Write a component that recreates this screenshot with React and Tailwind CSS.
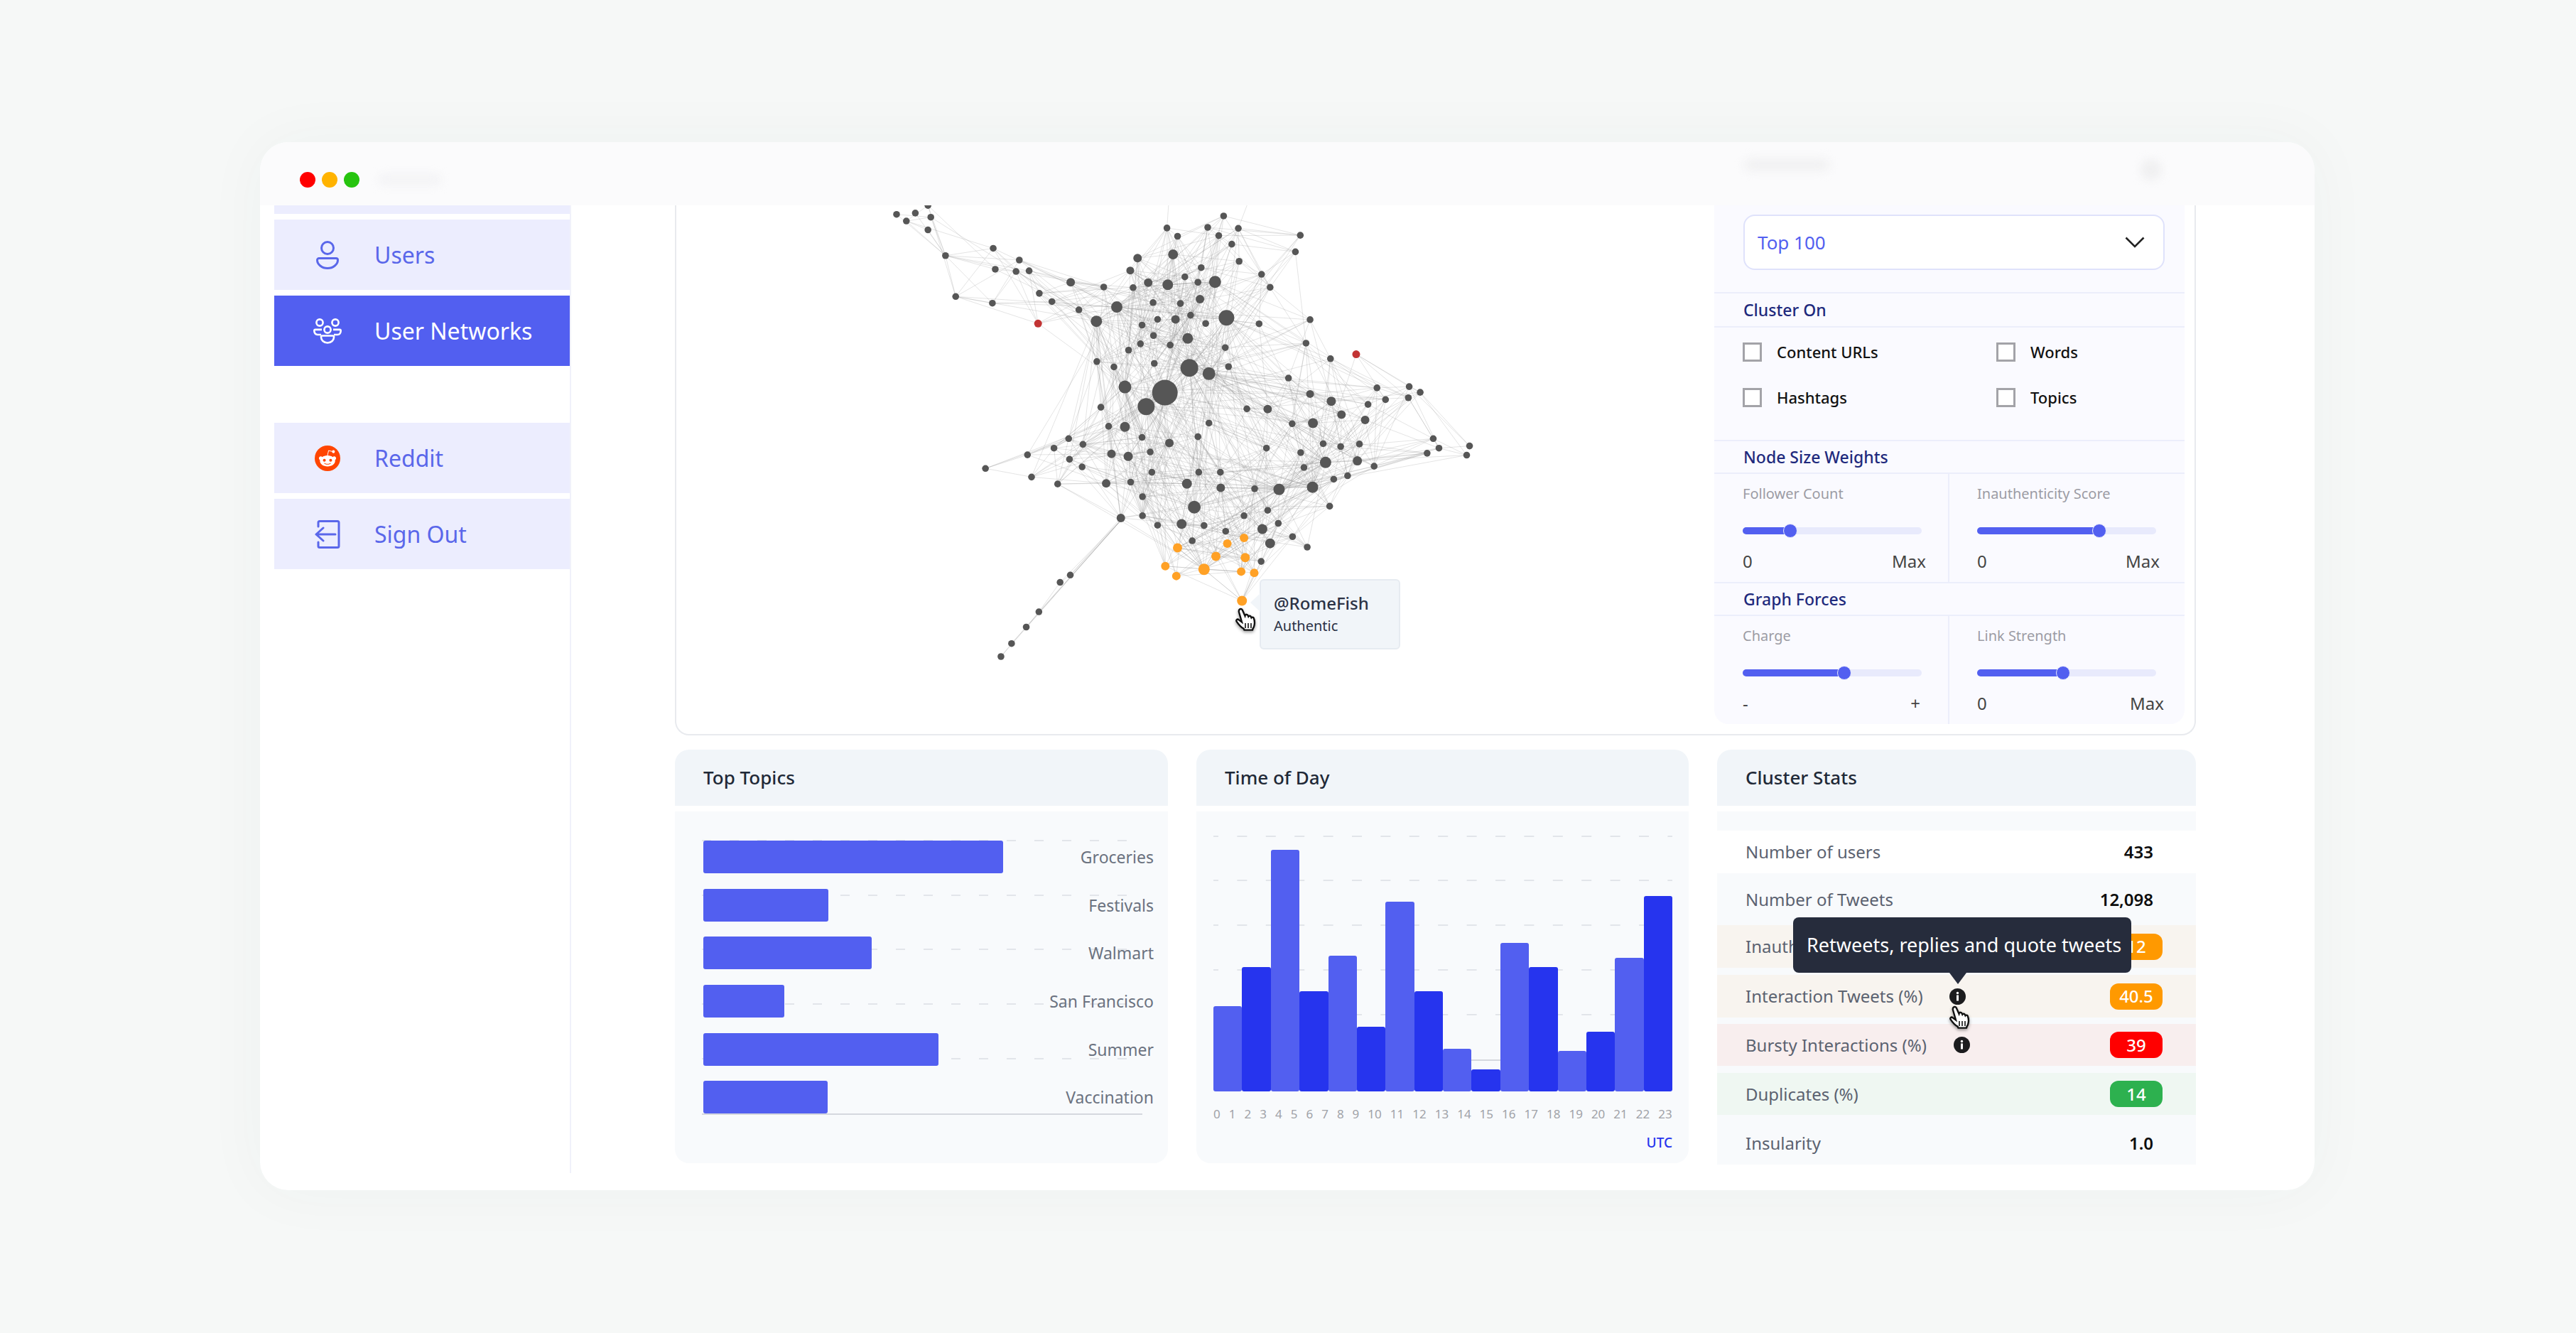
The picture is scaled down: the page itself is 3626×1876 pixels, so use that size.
import React from 'react'
import { FaRedditAlien } from 'react-icons/fa'

const FONT = "font-['Noto_Sans',sans-serif]"

// graph nodes read off the reference, [x, y, r], x/y in a 1.742 x 2.24 stretched crop
const RAW_NODES = [
  [108,71],[154,67],[132,92],[192,80],[185,120],[228,201],[185,43],[345,178],[409,215],[350,244],[401,251],[433,249],[458,320],[489,346],[555,372],[253,330],[343,351],
  [535,285,6],[616,300],[688,302],[725,286,6],[773,293,7.5],[815,268],[847,285],[889,284,8.5],[855,239],[786,197,7],[699,209,6],[681,248,5.5],[771,114],[797,140],[871,112],[898,138],[910,76],[946,115],[930,165],[948,219],[1098,137],[1086,189],[1003,260],[1024,301],
  [737,349],[804,352],[852,338,6],[648,363,8],[598,408,8],[710,420],[748,402],[792,402,6],[829,389],[866,415],[917,397,11],[997,416],[1122,403],[1112,477],[1172,526],
  [738,453],[706,479],[677,499],[779,483],[822,462,7.5],[914,491],[599,535],[641,552],[740,541],[826,555,12.5],[874,573,9],[922,551],[1069,587],
  [668,615,9],[766,633,18],[720,677,12],[609,679],[628,739],[668,741,7],[874,729],[967,684],[1018,685,6],[1078,731],[1122,637,5.5],[1174,660,6.5],[1129,729,7],[1199,702,6],[1264,670],[1257,719,6],[1286,618],[1307,655],[1365,614],[1363,649],[1392,632],
  [530,778],[494,808],[565,796],[429,829],[532,843],[563,867],[326,872],[439,899],[503,921],[622,919,6],[682,915],[710,774],[777,792,6],[847,772],[635,826,6],[676,834,6.5],[730,820],[734,884],[1015,808],[1099,822],[1154,794],[1197,803],[1243,795],[1160,853,8],[1238,848,6.5],[1107,869],[1180,906],[1214,895],[1279,865],[1424,778],[1438,808],[1409,824],[1513,801],[1506,830],
  [820,920,7],[849,884],[902,884],[903,933,6],[986,936],[1046,938,8],[1128,931,8],[1170,991],[711,961],[838,994,9],[1018,1004],[960,1021],[658,1028,6],[711,1021],[748,1051],[807,1047,7],[862,1052],[915,1070],[1005,1063,7],[1044,1045],[1079,1087],[833,1100],[1024,1108,7],[1115,1120],[1002,1165],
  [455,415,5.5,'#c23434'],[1235,512,5.5,'#c23434'],
  [960,1091,6,'#ffa126'],[797,1122,6.5,'#ffa126'],[919,1109,6,'#ffa126'],[891,1149,6.5,'#ffa126'],[963,1153,6.5,'#ffa126'],[767,1180,6,'#ffa126'],[794,1211,6,'#ffa126'],[862,1190,8,'#ffa126'],[953,1197,6,'#ffa126'],[985,1201,6,'#ffa126'],[955,1289,7,'#ffa126'],
  [534,1208],[509,1231],[457,1324],[426,1372],[390,1424],[364,1465],
]

const toX = (v) => 1200 + v / 1.742
const toY = (v) => 270 + v / 2.24
const NODES = RAW_NODES.map(([x, y, r, c]) => ({ x: toX(x), y: toY(y), r: r || 4.8, c: c || '#565656' }))

const hash = (a, b) => ((a * 7919 + b * 104729 + a * b * 31) % 997) % 100

const buildEdges = () => {
  const edges = []
  const tailStart = NODES.length - 6
  NODES.forEach((a, i) => {
    if (i >= tailStart) return
    NODES.forEach((b, j) => {
      if (j <= i || j >= tailStart) return
      const d = Math.hypot(a.x - b.x, a.y - b.y)
      const hub = a.r >= 8 || b.r >= 8
      const limit = hub ? 280 : 135
      const odds = hub ? 34 : 38
      if (d < limit && hash(i, j) < odds) edges.push([a.x, a.y, b.x, b.y])
    })
  })
  // the tail that hangs off the bottom left
  const anchor = { x: toX(658), y: toY(1028) }
  const chain = [anchor, ...NODES.slice(tailStart)]
  chain.slice(1).forEach((n, i) => {
    edges.push([chain[i].x, chain[i].y, n.x, n.y])
    edges.push([anchor.x + 3, anchor.y, n.x, n.y])
  })
  edges.push([toX(775), toY(40), toX(771), toY(114)], [toX(968), toY(40), toX(946), toY(115)])
  return edges
}
const EDGES = buildEdges()

const UsersIcon = () => (
  <svg width="32" height="40" viewBox="0 0 32 40" fill="none" stroke="currentColor" strokeWidth="3">
    <circle cx="16" cy="10" r="8.5" />
    <path d="M4 24.5H28a2.5 2.5 0 0 1 2.5 2.5C30.5 33 24 38.5 16 38.5S1.5 33 1.5 27A2.5 2.5 0 0 1 4 24.5Z" />
  </svg>
)

const NetworkIcon = () => (
  <svg width="40" height="36" viewBox="0 0 40 36" fill="none" stroke="currentColor" strokeWidth="2.6">
    <circle cx="9" cy="6" r="4.6" />
    <circle cx="31" cy="6" r="4.6" />
    <circle cx="20" cy="16" r="4.6" />
    <path d="M11 23H6C3 23 1.3 20.5 1.3 17.5c0-1 .7-1.6 1.6-1.6H12" />
    <path d="M29 23h5c3 0 4.7-2.5 4.7-5.5 0-1-.7-1.6-1.6-1.6H28" />
    <path d="M12.5 24.5h15c1 0 1.6.7 1.6 1.6 0 4.5-3.8 8.4-9.1 8.4s-9.1-3.9-9.1-8.4c0-.9.6-1.6 1.6-1.6Z" />
  </svg>
)

const SignOutIcon = () => (
  <svg width="36" height="40" viewBox="0 0 36 40" fill="none" stroke="currentColor" strokeWidth="3" strokeLinecap="round" strokeLinejoin="round">
    <path d="M5 9V3.500A2 2 0 0 1 7 1.500H32a2 2 0 0 1 2 2V36.500a2 2 0 0 1-2 2H7a2 2 0 0 1-2-2V31" />
    <path d="M29 20H2M2 20l10-9M2 20l10 9" />
  </svg>
)

const Hand = ({ className }) => (
  <svg className={className} width="30" height="34" viewBox="0 0 30 34">
    <path
      d="M7 2.5c1.5-1 3.2-.2 3.9 1.3l3.6 8 .3-1c.8-1.4 3-1.3 3.7.3l.7 1.5c.7-1.3 2.9-1.2 3.6.3l.6 1.4c.8-1.1 2.7-.9 3.3.5 1.4 3.4 1.6 7 .8 10.4-.3 1.6-1 3-1.9 4.4l-.6 2H13.5l-1-2C9 28 5.6 24 2.6 19.6c-1-1.5.7-3.6 2.4-2.9l5 3.7L6 6.5C5.6 5 6 3.4 7 2.5Z"
      fill="#fff"
      stroke="#111"
      strokeWidth="2.4"
    />
    <path d="M15 22v7M19 22v7M23 22v7" stroke="#111" strokeWidth="1.6" />
  </svg>
)

const InfoIcon = () => (
  <svg width="23" height="23" viewBox="0 0 23 23">
    <circle cx="11.5" cy="11.5" r="11.5" fill="#1c1c1e" />
    <circle cx="11.5" cy="6.5" r="1.7" fill="#fff" />
    <rect x="10" y="9.5" width="3" height="8" fill="#fff" />
  </svg>
)

const NavItem = ({ icon, label, active }) => (
  <div className={`flex h-[99px] items-center pl-[55px] ${active ? 'bg-[#525ff0] text-white' : 'bg-[#ecedfe] text-[#5a67ea]'}`}>
    <div className="flex w-[40px] justify-center">{icon}</div>
    <span className="ml-[46px] text-[32px]">{label}</span>
  </div>
)

const Sidebar = () => (
  <aside className="flex w-[438px] shrink-0 flex-col gap-[8px] border-r-2 border-[#f0f1fa] pl-[20px]">
    <div className="h-[12px] bg-[#ecedfe]" />
    <NavItem icon={<UsersIcon />} label="Users" />
    <NavItem icon={<NetworkIcon />} label="User Networks" active />
    <div className="h-[64px]" />
    <NavItem
      label="Reddit"
      icon={
        <div className="flex h-[36px] w-[36px] items-center justify-center rounded-full bg-[#ff4500] text-white">
          <FaRedditAlien size={26} />
        </div>
      }
    />
    <NavItem icon={<SignOutIcon />} label="Sign Out" />
  </aside>
)

const Graph = () => (
  <svg className="h-[744px] w-[1461px] shrink-0" viewBox="952 289 1461 744">
    {EDGES.map(([x1, y1, x2, y2], i) => (
      <line key={i} x1={x1} y1={y1} x2={x2} y2={y2} stroke="#8a8a8a" strokeOpacity="0.26" strokeWidth="0.9" />
    ))}
    {NODES.map((n, i) => (
      <circle key={i} cx={n.x} cy={n.y} r={n.r} fill={n.c} />
    ))}
  </svg>
)

const Check = ({ label }) => (
  <div className="flex h-[64px] items-center gap-[21px]">
    <div className="h-[27px] w-[27px] border-[3px] border-[#a3a3a8] bg-white" />
    <span className="text-[22px] font-medium text-[#111]">{label}</span>
  </div>
)

const SectionTitle = ({ children }) => (
  <div className="flex h-[48px] items-center border-y-2 border-[#eceefb] pl-[41px] text-[23px] font-medium text-[#1f2a7d]">{children}</div>
)

const Slider = ({ title, value, left, right, rowWidth, divided }) => (
  <div className={`flex h-[152px] w-[332px] flex-col ${divided ? 'border-r-2 border-[#eceefb] pl-[40px]' : 'pl-[39px]'}`}>
    <div className="mt-[14px] h-[28px] text-[20px] leading-[28px] text-[#9c9ca4]">{title}</div>
    <div className="relative mt-[33px] h-[10px] w-[252px] rounded-full bg-[#e8eafc]">
      <div className="h-[10px] rounded-full bg-[#525ff0]" style={{ width: value }} />
      <div className="absolute top-[-5px] h-[20px] w-[20px] rounded-full border border-[#e8eafc] bg-[#525ff0]" style={{ left: value - 10 }} />
    </div>
    <div className={`mt-[23px] flex justify-between text-[24px] leading-[30px] text-[#444] ${rowWidth}`}>
      <span>{left}</span>
      <span>{right}</span>
    </div>
  </div>
)

const ControlPanel = () => (
  <div className="flex w-[662px] flex-col self-start rounded-b-[20px] bg-[#fafaff]">
    <div className="px-[41px] pb-[31px] pt-[13px]">
      <div className="flex h-[78px] w-[593px] items-center justify-between rounded-[16px] border-2 border-[#dfe2fb] bg-white pl-[18px] pr-[26px]">
        <span className="text-[26px] text-[#525ff0]">Top 100</span>
        <svg width="28" height="16" viewBox="0 0 28 16" fill="none" stroke="#222" strokeWidth="2.6"><path d="M1.5 1.5 14 14 26.500 1.500" /></svg>
      </div>
    </div>
    <div className="flex h-[50px] items-center border-y-2 border-[#eceefb] pl-[41px] text-[23px] font-medium text-[#1f2a7d]">Cluster On</div>
    <div className="grid h-[158px] grid-cols-[357px_1fr] content-start pl-[40px] pt-[2px]">
      <Check label="Content URLs" />
      <Check label="Words" />
      <Check label="Hashtags" />
      <Check label="Topics" />
    </div>
    <SectionTitle>Node Size Weights</SectionTitle>
    <div className="flex">
      <Slider title="Follower Count" value={67} left="0" right="Max" rowWidth="w-[258px]" divided />
      <Slider title="Inauthenticity Score" value={172} left="0" right="Max" rowWidth="w-[257px]" />
    </div>
    <SectionTitle>Graph Forces</SectionTitle>
    <div className="flex">
      <Slider title="Charge" value={143} left="-" right="+" rowWidth="w-[250px]" divided />
      <Slider title="Link Strength" value={121} left="0" right="Max" rowWidth="w-[263px]" />
    </div>
  </div>
)

const CardHeader = ({ title }) => (
  <div className="flex h-[79px] items-center rounded-t-[20px] bg-[#f1f5f9] pl-[40px] text-[26px] font-medium text-[#1f2937]">{title}</div>
)

const TOPICS = [
  ['Groceries', 422],
  ['Festivals', 175.500],
  ['Walmart', 237],
  ['San Francisco', 114],
  ['Summer', 331],
  ['Vaccination', 175],
]

const TopTopics = () => (
  <div>
    <CardHeader title="Top Topics" />
    <div className="relative mt-[8px] h-[495px] rounded-b-[20px] bg-[#f8fafc] pl-[40px] pr-[20px] pt-[41px]">
      <svg className="absolute left-[38px] top-[40px]" width="620" height="388">
        {[1, 78, 154, 231, 308].map((y) => (
          <line key={y} x1="0" x2="620" y1={y} y2={y} stroke="#e2e5ea" strokeWidth="2" strokeDasharray="13 26" />
        ))}
        <line x1="0" x2="620" y1="386" y2="386" stroke="#d5d8de" strokeWidth="2" />
      </svg>
      <div className="relative flex flex-col gap-[21.7px]">
        {TOPICS.map(([name, w]) => (
          <div key={name} className="flex h-[46px] items-center justify-between">
            <div className="h-[46px] rounded-[3px] bg-[#525ff0]" style={{ width: w }} />
            <span className="text-[23px] leading-[46px] text-[#6b7280]">{name}</span>
          </div>
        ))}
      </div>
    </div>
  </div>
)

const HOURS = [120, 175, 340, 141, 191, 91, 267, 141, 60, 31, 209, 175, 57, 84, 188, 275]

const TimeOfDay = () => (
  <div>
    <CardHeader title="Time of Day" />
    <div className="mt-[8px] h-[495px] rounded-b-[20px] bg-[#f8fafc] pl-[24px] pr-[23px] pt-[34px]">
      <div className="relative flex h-[360px] items-end">
        <svg className="absolute left-0 top-0" width="646" height="320">
          {[1, 63, 126, 189, 252].map((y) => (
            <line key={y} x1="0" x2="646" y1={y} y2={y} stroke="#e2e5ea" strokeWidth="2" strokeDasharray="14 26.400" strokeDashoffset="7" />
          ))}
          <line x1="0" x2="646" y1="316" y2="316" stroke="#d5d8de" strokeWidth="2" />
        </svg>
        {HOURS.map((h, i) => (
          <div key={i} className={`relative flex-1 rounded-[3px] ${i % 2 ? 'bg-[#2634ee]' : 'bg-[#525ff0]'}`} style={{ height: h }} />
        ))}
      </div>
      <div className="mt-[20px] flex justify-between text-[17px] leading-[24px] text-[#a0a2a8]">
        {Array.from({ length: 24 }, (_, i) => (
          <span key={i}>{i}</span>
        ))}
      </div>
      <div className="mt-[16px] text-right text-[19px] font-medium leading-[24px] text-[#2634ee]">UTC</div>
    </div>
  </div>
)

const Pill = ({ className, children }) => (
  <div className={`mr-[-13px] flex h-[37px] w-[74px] items-center justify-center rounded-[12px] text-[24px] font-medium text-white ${className}`}>{children}</div>
)

const StatRow = ({ className, label, info, infoGap, children }) => (
  <div className={`flex items-center justify-between pl-[40px] pr-[60px] ${className}`}>
    <div className="flex items-center text-[24px] text-[#5b6270]">
      <span>{label}</span>
      {info && <span className={`flex ${infoGap}`}><InfoIcon /></span>}
    </div>
    {children}
  </div>
)

const Value = ({ children }) => <span className="text-[24px] font-semibold text-[#0d0d0d]">{children}</span>

const ClusterStats = () => (
  <div className="relative">
    <CardHeader title="Cluster Stats" />
    <div className="mt-[8px] h-[497px] bg-[#f8fafc]">
      <div className="h-[27px]" />
      <StatRow className="h-[60px] bg-white" label="Number of users"><Value>433</Value></StatRow>
      <StatRow className="h-[73px]" label="Number of Tweets"><Value>12,098</Value></StatRow>
      <StatRow className="mb-[10px] h-[60px] bg-[#f8f4ef]" label="Inauthenticity (%)"><Pill className="bg-[#ff9900]">12</Pill></StatRow>
      <StatRow className="mb-[9px] h-[60px] bg-[#f8f4ef]" label="Interaction Tweets (%)" info infoGap="ml-[37px]"><Pill className="bg-[#ff9900]">40.5</Pill></StatRow>
      <StatRow className="mb-[10px] h-[59px] bg-[#f8eeee]" label="Bursty Interactions (%)" info infoGap="ml-[38px]"><Pill className="bg-[#ff0000]">39</Pill></StatRow>
      <StatRow className="h-[59px] bg-[#eff7f2]" label="Duplicates (%)"><Pill className="bg-[#2db14f]">14</Pill></StatRow>
      <StatRow className="h-[70px] pt-[10px]" label="Insularity"><Value>1.0</Value></StatRow>
    </div>
    {/* hover tooltip over the Interaction Tweets row */}
    <div className="absolute left-[107px] top-[236px] flex h-[78px] w-[476px] items-center rounded-[8px] bg-[#262c3c] pl-[19px] text-[27px] text-white">
      Retweets, replies and quote tweets
      <div className="absolute left-[220px] top-[78px] h-0 w-0 border-x-[12px] border-t-[16px] border-x-transparent border-t-[#262c3c]" />
    </div>
    <Hand className="absolute left-[326px] top-[360px] drop-shadow-[0_2px_2px_rgba(0,0,0,0.4)]" />
  </div>
)

export default function App() {
  return (
    <div className={`h-[1876px] w-[3626px] bg-[#f6f8f7] pl-[366px] pt-[200px] ${FONT}`}>
      <div className="h-[1475px] w-[2892px] overflow-hidden rounded-[40px] bg-white shadow-[0_0_90px_rgba(60,70,70,0.04)]">
        <div className="flex h-[89px] bg-[#fbfbfc]">
          <div className="flex w-[438px] items-start pl-[56px] pt-[42px]">
            <div className="h-[22px] w-[22px] rounded-full bg-[#ff0000]" />
            <div className="ml-[9px] h-[22px] w-[22px] rounded-full bg-[#ffb300]" />
            <div className="ml-[9px] h-[22px] w-[22px] rounded-full bg-[#26c40f]" />
            <div className="ml-[26px] mt-[2px] h-[18px] w-[90px] rounded-full bg-[#f4f4f6] blur-[6px]" />
          </div>
          <div className="flex flex-1 items-start pl-[1651px] pt-[24px]">
            <div className="h-[16px] w-[120px] rounded-full bg-[#f0f0f1] blur-[7px]" />
            <div className="ml-[438px] h-[30px] w-[30px] rounded-full bg-[#f0f0f1] blur-[6px]" />
          </div>
        </div>

        <div className="flex h-[1362px]">
          <Sidebar />
          <main className="w-[2141px] pl-[146px]">
            <div className="relative flex h-[746px] w-[2141px] rounded-b-[20px] border-x-2 border-b-2 border-[#e8eaee]">
              <Graph />
              <ControlPanel />
              <div className="absolute left-[821px] top-[526px] flex h-[99px] w-[198px] flex-col rounded-[6px] border-2 border-[#e6ebf1] bg-[#f1f5f9] pl-[18px] text-[#2b3245]">
                <span className="mt-[16px] text-[24px] font-medium leading-[32px]">@RomeFish</span>
                <span className="mt-[2px] text-[20px] leading-[28px]">Authentic</span>
                <div className="absolute left-[-15px] top-[18px] h-0 w-0 border-y-[13px] border-r-[14px] border-y-transparent border-r-[#f1f5f9]" />
              </div>
              <Hand className="absolute left-[786px] top-[566px] drop-shadow-[0_2px_2px_rgba(0,0,0,0.4)]" />
            </div>
            <div className="mt-[20px] grid w-[2141px] grid-cols-[694px_693px_674px] gap-x-[40px]">
              <TopTopics />
              <TimeOfDay />
              <ClusterStats />
            </div>
          </main>
        </div>
      </div>
    </div>
  )
}
